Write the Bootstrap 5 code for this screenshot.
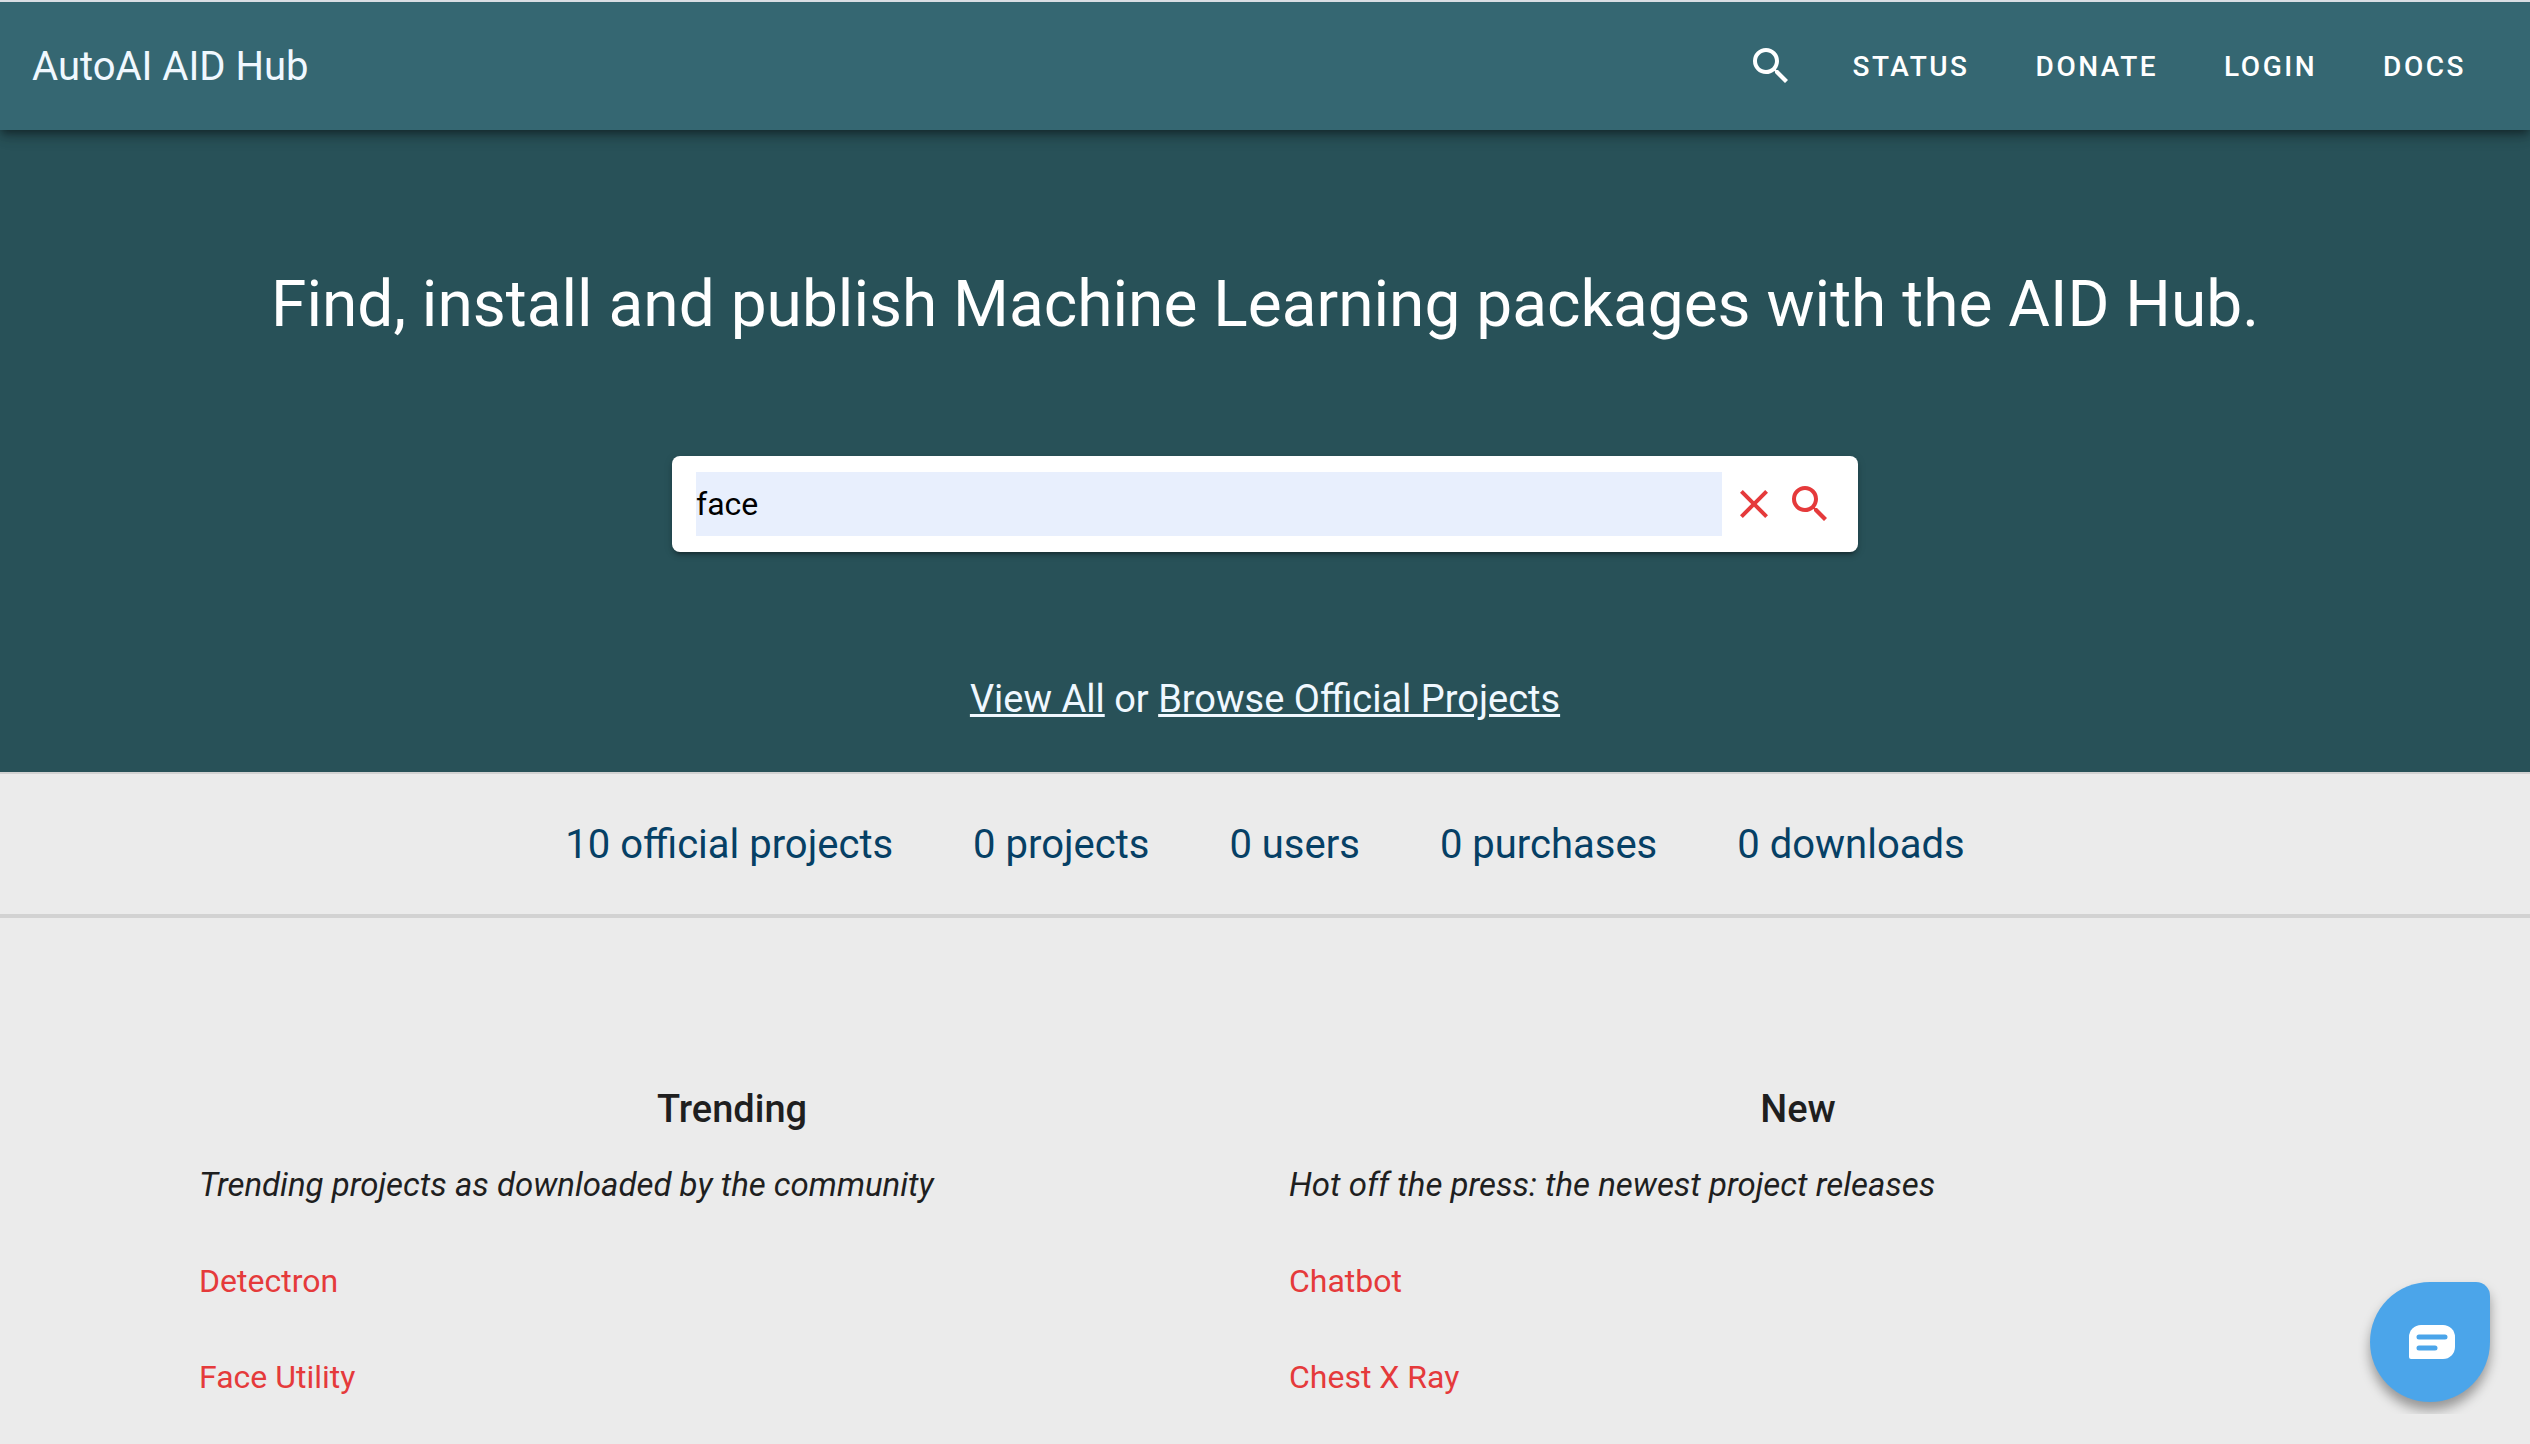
<!DOCTYPE html>
<html lang="en">
<head>
<meta charset="utf-8">
<meta name="viewport" content="width=device-width, initial-scale=1">
<title>AutoAI AID Hub</title>
<link href="https://cdn.jsdelivr.net/npm/bootstrap@5.3.0/dist/css/bootstrap.min.css" rel="stylesheet">
<style>
  body { font-family: Roboto, "Noto Sans", sans-serif; font-size: 32px; line-height: 48px; color: #1f1f1f; background: #ebebeb; overflow-x: hidden; }
  svg { display: block; fill: currentColor; }
  .icon-lg { width: 48px; height: 48px; }
  .topbar { min-height: 130px; padding: 0 32px; background: #356772; border-top: 2px solid #d9dee4; z-index: 2;
    box-shadow: 0 4px 8px -2px rgba(0,0,0,.4), 0 8px 10px rgba(0,0,0,.14), 0 2px 20px rgba(0,0,0,.12); }
  .brand-link { padding-top: 2px; font-size: 40px; color: #f0f8ff; }
  .topbar .nav { column-gap: 2px; }
  .topbar .nav-link { padding: 26px 32px 24px; font-size: 28px; line-height: 48px; font-weight: 500; letter-spacing: .09em; color: #fff; }
  .topbar .icon-btn { padding: 24px; }
  .hero { background: #285158; color: #fff; padding: 127px 32px 45px; }
  .hero-title { font-size: 64px; line-height: 96px; font-weight: 400; }
  .search-box { max-width: 1186px; min-height: 96px; padding: 16px 24px; margin-top: 103px; border-radius: 8px; background: #fff; color: #e53a3b;
    box-shadow: 0 6px 2px -4px rgba(0,0,0,.2), 0 4px 4px rgba(0,0,0,.14), 0 2px 10px rgba(0,0,0,.12); }
  .search-box input { height: 64px; min-width: 0; background: #e8effd; color: #000; font-size: 32px; }
  .hero-links { font-size: 38px; line-height: 56px; margin-top: 119px; color: #f0f8ff; }
  .hero-links a { color: #f0f8ff; }
  .stats { border-top: 2px solid #d2d2d2; border-bottom: 4px solid #d2d2d2; padding: 41px 32px 39px; font-size: 40px; line-height: 60px; color: #064065; column-gap: 80px; }
  .projects { padding: 159px 199px 0; }
  .col-title { font-size: 38px; line-height: 64px; font-weight: 500; margin-bottom: 20px; }
  .col-note { font-size: 33px; margin-bottom: 48px; }
  .project-list { row-gap: 48px; }
  .project-list a { color: #e53a3b; }
  .chat-dock { right: 28px; bottom: 30px; padding: 12px; z-index: 5; overflow: hidden; }
  .chat-btn { width: 120px; height: 120px; padding: 0 0 0 4px; border-radius: 60px 14px 60px 60px; background: #4ba5ea; box-shadow: 0 8px 12px rgba(0,0,0,.36); }
</style>
<script src="https://cdn.jsdelivr.net/npm/bootstrap@5.3.0/dist/js/bootstrap.bundle.min.js" defer></script>
</head>
<body>
<header class="topbar position-relative d-flex align-items-center justify-content-between">
  <a class="brand-link text-decoration-none" href="#">AutoAI AID Hub</a>
  <nav class="nav align-items-center text-uppercase" aria-label="Main">
    <button type="button" class="icon-btn btn border-0 text-white" aria-label="Search">
      <svg class="icon-lg" viewBox="0 0 24 24"><path d="M9.5,3A6.5,6.5 0 0,1 16,9.5C16,11.11 15.41,12.59 14.44,13.73L14.71,14H15.5L20.5,19L19,20.5L14,15.5V14.71L13.73,14.44C12.59,15.41 11.11,16 9.5,16A6.5,6.5 0 0,1 3,9.5A6.5,6.5 0 0,1 9.5,3M9.5,5C7,5 5,7 5,9.5C5,12 7,14 9.5,14C12,14 14,12 14,9.5C14,7 12,5 9.5,5Z"/></svg>
    </button>
    <a class="nav-link" href="#">Status</a>
    <a class="nav-link" href="#">Donate</a>
    <a class="nav-link" href="#">Login</a>
    <a class="nav-link" href="#">Docs</a>
  </nav>
</header>
<main>
  <section class="hero text-center">
    <h1 class="hero-title m-0">Find, install and publish Machine Learning packages with the AID Hub.</h1>
    <form class="search-box d-flex align-items-center gap-2 w-100 mx-auto">
      <input type="text" class="border-0 p-0 flex-grow-1 rounded-0" value="face" aria-label="Search packages">
      <button type="button" class="btn border-0 p-0 text-reset" aria-label="Clear">
        <svg class="icon-lg" viewBox="0 0 24 24"><path d="M19,6.41L17.59,5L12,10.59L6.41,5L5,6.41L10.59,12L5,17.59L6.41,19L12,13.41L17.59,19L19,17.59L13.41,12L19,6.41Z"/></svg>
      </button>
      <button type="submit" class="btn border-0 p-0 text-reset" aria-label="Search">
        <svg class="icon-lg" viewBox="0 0 24 24"><path d="M9.5,3A6.5,6.5 0 0,1 16,9.5C16,11.11 15.41,12.59 14.44,13.73L14.71,14H15.5L20.5,19L19,20.5L14,15.5V14.71L13.73,14.44C12.59,15.41 11.11,16 9.5,16A6.5,6.5 0 0,1 3,9.5A6.5,6.5 0 0,1 9.5,3M9.5,5C7,5 5,7 5,9.5C5,12 7,14 9.5,14C12,14 14,12 14,9.5C14,7 12,5 9.5,5Z"/></svg>
      </button>
    </form>
    <p class="hero-links mb-0"><a href="#">View All</a> or <a href="#">Browse Official Projects</a></p>
  </section>
  <section class="stats d-flex flex-wrap justify-content-center" aria-label="Totals">
    <span>10 official projects</span>
    <span>0 projects</span>
    <span>0 users</span>
    <span>0 purchases</span>
    <span>0 downloads</span>
  </section>
  <section class="projects">
    <div class="row g-0">
      <div class="col-6">
        <h2 class="col-title text-center">Trending</h2>
        <p class="col-note fst-italic">Trending projects as downloaded by the community</p>
        <ul class="project-list list-unstyled d-flex flex-column align-items-start m-0">
          <li><a class="text-decoration-none" href="#">Detectron</a></li>
          <li><a class="text-decoration-none" href="#">Face Utility</a></li>
        </ul>
      </div>
      <div class="col-6">
        <h2 class="col-title text-center">New</h2>
        <div class="ps-4">
          <p class="col-note fst-italic">Hot off the press: the newest project releases</p>
          <ul class="project-list list-unstyled d-flex flex-column align-items-start m-0">
            <li><a class="text-decoration-none" href="#">Chatbot</a></li>
            <li><a class="text-decoration-none" href="#">Chest X Ray</a></li>
          </ul>
        </div>
      </div>
    </div>
  </section>
</main>
<div class="chat-dock position-fixed">
  <button type="button" class="chat-btn border-0 d-flex align-items-center justify-content-center" aria-label="Open chat">
    <svg width="48" height="36" viewBox="0 0 48 36"><path fill="#fff" d="M13 1h22a12 12 0 0 1 12 12v10a12 12 0 0 1-12 12H3a2 2 0 0 1-2-2V13A12 12 0 0 1 13 1z"/><path fill="none" stroke="#4ba5ea" stroke-width="5" stroke-linecap="round" d="M11 13h26M11 24h16"/></svg>
  </button>
</div>
</body>
</html>
